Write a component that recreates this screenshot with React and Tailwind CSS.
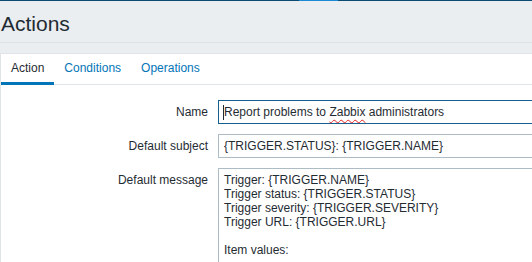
import React from 'react';

const TABS = ['Action', 'Conditions', 'Operations'];

const MESSAGE = [
  'Trigger: {TRIGGER.NAME}',
  'Trigger status: {TRIGGER.STATUS}',
  'Trigger severity: {TRIGGER.SEVERITY}',
  'Trigger URL: {TRIGGER.URL}',
  '',
  'Item values:',
];

export default function App() {
  return (
    <div className="w-[532px] h-[262px] overflow-hidden bg-[#ebeef0] font-['Liberation_Sans',Arial,sans-serif] text-[#1f2c33]">
      {/* top strip */}
      <div className="h-px bg-[#0b4a72] flex">
        <div className="ml-[299px] w-[39px] bg-[#1a8ad4]" />
      </div>

      {/* page title */}
      <div className="pt-[11px] pb-[6px] border-b border-[#dde2e6]">
        <h1 className="text-[21px] leading-[24px] pl-px">Actions</h1>
      </div>

      {/* panel */}
      <div className="mt-[10px] bg-white border-l border-t border-[#dfe4e7] h-[300px]">
        {/* tabs */}
        <div className="flex border-b border-[#dfe4e7] text-[12px] leading-[14px]">
          {TABS.map((t, i) => (
            <div
              key={t}
              className={`h-[31px] -mb-px px-[10px] flex items-center border-b-[3px] ${
                i === 0 ? 'border-[#0275b8] text-[#1f2c33]' : 'border-transparent text-[#0275b8]'
              }`}
            >
              {t}
            </div>
          ))}
        </div>

        {/* form */}
        <div className="pt-[15px] grid grid-cols-[207px_1fr] gap-x-[10px] gap-y-[10px] text-[12px] leading-[14px]">
          <div className="text-right self-center">Name</div>
          <div className="w-[400px] h-[24px] border border-[#15608f] flex items-center pl-[5px] whitespace-nowrap">
            <span className="w-px h-[15px] bg-[#1f2c33] -ml-px" />
            <span>
              Report problems to{' '}
              <span className="underline decoration-wavy decoration-[#e02020] decoration-1 underline-offset-[3px]">Zabbix</span>{' '}
              administrators
            </span>
          </div>

          <div className="text-right self-center">Default subject</div>
          <div className="w-[400px] h-[24px] border border-[#acbbc4] flex items-center pl-[5px] whitespace-nowrap">
            {'{TRIGGER.STATUS}: {TRIGGER.NAME}'}
          </div>

          <div className="text-right pt-[5px]">Default message</div>
          <div className="w-[400px] h-[160px] border border-[#acbbc4] pl-[5px] pt-[4px] whitespace-pre">
            {MESSAGE.map((l, i) => (
              <div key={i} className="h-[14px]">{l}</div>
            ))}
          </div>
        </div>
      </div>
    </div>
  );
}
